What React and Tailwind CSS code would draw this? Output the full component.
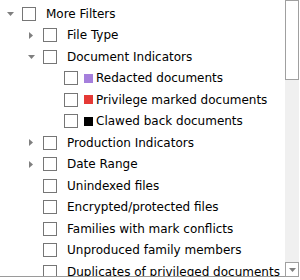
import React from 'react';

const items = [
  { level: 0, label: 'More Filters', arrow: 'down' },
  { level: 1, label: 'File Type', arrow: 'right' },
  { level: 1, label: 'Document Indicators', arrow: 'down' },
  { level: 2, label: 'Redacted documents', swatch: 'bg-[#a57fdc]' },
  { level: 2, label: 'Privilege marked documents', swatch: 'bg-[#e53935]' },
  { level: 2, label: 'Clawed back documents', swatch: 'bg-black' },
  { level: 1, label: 'Production Indicators', arrow: 'right' },
  { level: 1, label: 'Date Range', arrow: 'right' },
  { level: 1, label: 'Unindexed files' },
  { level: 1, label: 'Encrypted/protected files' },
  { level: 1, label: 'Families with mark conflicts' },
  { level: 1, label: 'Unproduced family members' },
  { level: 1, label: 'Duplicates of privileged documents' },
];

const indent = ['pl-[7px]', 'pl-[28px]', 'pl-[49px]'];

function Arrow({ dir }) {
  return (
    <span className="w-[15px] shrink-0 flex items-center">
      {dir === 'down' && (
        <svg width="7" height="4" viewBox="0 0 7 4">
          <path d="M0 0H7L3.5 4Z" fill="#7f7f7f" />
        </svg>
      )}
      {dir === 'right' && (
        <svg width="4" height="7" viewBox="0 0 4 7" className="ml-[1px]">
          <path d="M0 0V7L4 3.5Z" fill="#7f7f7f" />
        </svg>
      )}
    </span>
  );
}

function Row({ item }) {
  return (
    <div className={`flex items-center h-[21.5px] ${indent[item.level]}`}>
      <Arrow dir={item.arrow} />
      <span className="w-[14px] h-[14px] border border-[#767676] bg-white shrink-0" />
      {item.swatch ? (
        <>
          <span className={`ml-[6px] w-[9px] h-[9px] shrink-0 ${item.swatch}`} />
          <span className="ml-[3px] whitespace-nowrap">{item.label}</span>
        </>
      ) : (
        <span className="ml-[10px] whitespace-nowrap">{item.label}</span>
      )}
    </div>
  );
}

export default function App() {
  return (
    <div className="w-[300px] h-[280px] bg-white overflow-hidden relative text-[12px] text-black" style={{ fontFamily: '"DejaVu Sans", sans-serif' }}>
      <div className="flex h-[277px] border-b border-[#9a9a9a] w-[288px]">
        <div className="flex-1 pt-[3px] overflow-hidden">
          {items.map((it, i) => (
            <Row key={i} item={it} />
          ))}
        </div>
      </div>
      {/* scrollbar */}
      <div className="absolute right-[1px] top-0 w-[14px] h-[277px] bg-[#f0f0f0] flex flex-col justify-between">
        <div className="h-[80px] border border-[#a0a0a0] bg-white" />
        <div className="h-[15px] border border-[#a0a0a0] bg-white flex items-center justify-center">
          <svg width="7" height="4" viewBox="0 0 7 4">
            <path d="M0 0H7L3.5 4Z" fill="#7f7f7f" />
          </svg>
        </div>
      </div>
    </div>
  );
}
